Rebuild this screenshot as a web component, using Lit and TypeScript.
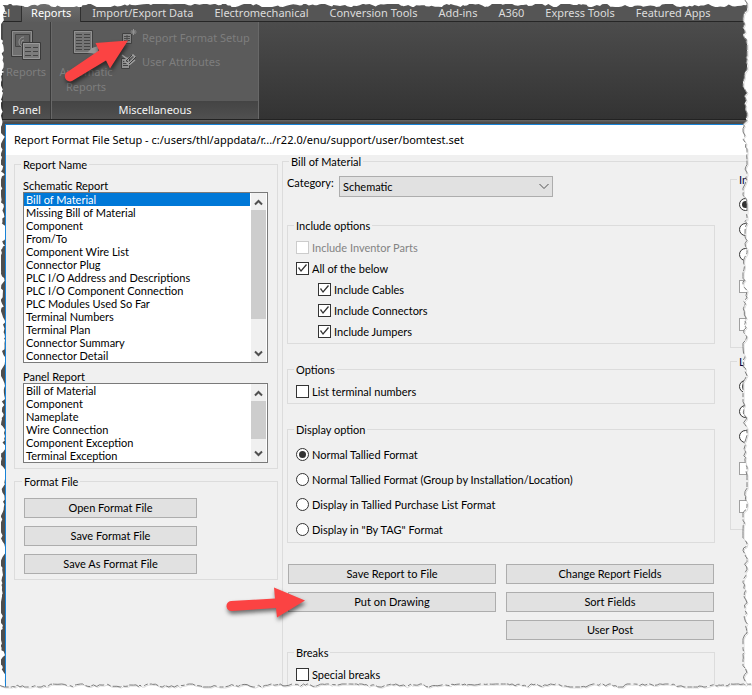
import { LitElement, html, css, svg, nothing } from "lit";
import { customElement, property } from "lit/decorators.js";

/* Deterministic noise so the torn paper edge is the same on every render. */
function noise(seed: number) {
  let s = seed;
  return () => {
    s = (s * 16807) % 2147483647;
    return s / 2147483647;
  };
}

/* Walks along an edge and returns [distance, depth] pairs. */
function tear(seed: number, length: number, low: number, high: number) {
  const rnd = noise(seed);
  const points: Array<[number, number]> = [];
  let depth = (low + high) / 2;
  let at = 0;
  while (at < length) {
    points.push([Math.round(at * 10) / 10, Math.round(depth * 10) / 10]);
    at += 1 + rnd() * 3;
    depth = Math.min(high, Math.max(low, depth + (rnd() - 0.5) * (high - low) * 1.3));
  }
  return points;
}

const REACH = 4000;

@customElement("torn-edge")
class TornEdge extends LitElement {
  @property() side: "top" | "right" | "bottom" | "left" = "top";

  static styles = css`
    :host { position: absolute; z-index: 3; pointer-events: none; overflow: hidden; }
    :host([side="top"]) { top: 0; left: 0; right: 0; height: 10px; }
    :host([side="bottom"]) { bottom: 0; left: 0; right: 0; height: 16px; }
    :host([side="left"]) { top: 0; bottom: 0; left: 0; width: 10px; }
    :host([side="right"]) { top: 0; bottom: 0; right: 0; width: 16px; }
    svg { display: block; }
    .paper { fill: #fff; }
    .rim { fill: none; stroke: #7c7c7c; stroke-width: 1; stroke-dasharray: 9 2 5 1 14 3 4 2; }
    .shade { fill: none; stroke: #dadada; stroke-width: 1; }
  `;

  render() {
    const flat = this.side === "top" || this.side === "bottom";
    const ranges = { top: [4, 7], left: [1, 5], right: [7, 11], bottom: [5, 8] } as const;
    const seeds = { top: 71, left: 913, right: 4201, bottom: 377 };
    const [low, high] = ranges[this.side];
    const pts = tear(seeds[this.side], REACH, low, high);
    const line = pts.map(([a, d]) => (flat ? `${a},${d}` : `${d},${a}`)).join(" ");
    const outer = this.side === "top" || this.side === "left" ? 0 : 20;
    const close = flat ? `${REACH},${outer} 0,${outer}` : `${outer},${REACH} ${outer},0`;
    const cast = this.side === "right" || this.side === "bottom";
    return html`<svg
      aria-hidden="true"
      width=${flat ? REACH : 16}
      height=${flat ? 16 : REACH}
    >
      <polygon class="paper" points="${line} ${close}"></polygon>
      ${cast
        ? svg`<polyline class="shade" transform="translate(1 1)" points=${line}></polyline>
              <polyline class="rim" points=${line}></polyline>`
        : nothing}
    </svg>`;
  }
}

@customElement("list-box")
class ListBox extends LitElement {
  @property() label = "";
  @property({ type: Array }) items: string[] = [];
  @property({ type: Number }) selected = -1;
  @property({ type: Number }) thumb = 60;

  static styles = css`
    :host { display: block; }
    label { display: block; line-height: 12px; }
    .frame { display: flex; border: 1px solid #7a7a7a; background: #fff; padding-right: 1px; }
    select {
      flex: 1; min-width: 0; margin: 0 1px 0 0; padding: 0; border: 0; border-radius: 0; outline: 0;
      background: #fff; font: inherit; color: #000; overflow: hidden; scrollbar-width: none;
      appearance: none; height: auto;
    }
    option { padding: 0 2px; min-height: 13px; height: 13px; line-height: 14px; box-sizing: border-box; }
    option:checked { background: #0078d7 linear-gradient(#0078d7, #0078d7); color: #fff; }
    .bar { width: 15px; background: #f0f0f0; display: flex; flex-direction: column; }
    .bar svg { display: block; flex: none; width: 15px; height: 17px; fill: none; stroke: #505050; stroke-width: 2; }
    .track { flex: 1; }
    .thumb { background: #cdcdcd; }
  `;

  render() {
    return html`
      <label for="list">${this.label}</label>
      <div class="frame">
        <select id="list" size=${this.items.length}>
          ${this.items.map(
            (t, i) => html`<option ?selected=${i === this.selected}>${t}</option>`
          )}
        </select>
        <div class="bar" aria-hidden="true">
          <svg viewBox="0 0 15 17"><path d="M4 11.500 7.500 8 11 11.500"></path></svg>
          <div class="track"><div class="thumb" style="height:${this.thumb}%"></div></div>
          <svg viewBox="0 0 15 17"><path d="M4 6.500 7.500 10 11 6.500"></path></svg>
        </div>
      </div>
    `;
  }
}

const TABS = [
  "el", "Reports", "Import/Export Data", "Electromechanical", "Conversion Tools",
  "Add-ins", "A360", "Express Tools", "Featured Apps",
];

const SCHEMATIC = [
  "Bill of Material", "Missing Bill of Material", "Component", "From/To",
  "Component Wire List", "Connector Plug", "PLC I/O Address and Descriptions",
  "PLC I/O Component Connection", "PLC Modules Used So Far", "Terminal Numbers",
  "Terminal Plan", "Connector Summary", "Connector Detail",
];

const PANEL = [
  "Bill of Material", "Component", "Nameplate", "Wire Connection",
  "Component Exception", "Terminal Exception",
];

const DISPLAY = [
  "Normal Tallied Format",
  "Normal Tallied Format (Group by Installation/Location)",
  "Display in Tallied Purchase List Format",
  'Display in "By TAG" Format',
];

@customElement("app-root")
class AppRoot extends LitElement {
  static styles = css`
    :host { display: block; background: #fff; color: #000; font: 11px/13px Lato, "Liberation Sans", Arial, sans-serif; }
    * { box-sizing: border-box; }
    button, input, select { font: inherit; color: inherit; margin: 0; }

    .window {
      position: relative; display: flex; flex-direction: column; min-height: 100vh;
      background: #4e4e4e; overflow: hidden;
    }

    .tabs, .ribbon, .title { font-family: "Noto Sans", "Open Sans", sans-serif; }
    .tabs {
      display: flex; gap: 1px; height: 22px; padding-top: 4px; border-bottom: 1px solid #262626;
      background: #555; color: #dcdcdc; white-space: nowrap;
    }
    .tab { flex: none; border: 0; background: none; padding: 0 10px; line-height: 16px; height: 18px; }
    .tab:first-child { padding-left: 1px; }
    .tab.current { background: linear-gradient(#6e6e6e, #5c5c5c); border: solid #303030; border-width: 0 1px; padding: 0 9px; color: #fff; }
    .ribbon {
      display: flex; height: 98px; background: linear-gradient(#4c4c4c, #333);
      border-bottom: 1px solid #222; padding-left: 3px;
    }
    .panel { display: flex; flex-direction: column; border-right: 1px solid #3a3a3a; background: #5b5b5b; }
    .panel.reports { width: 48px; }
    .panel.misc { width: 208px; border-left: 1px solid #686868; border-right-color: #686868; }
    .tools { flex: 1; display: flex; }
    .caption { height: 18px; line-height: 18px; text-align: center; color: #f4f4f4; background: linear-gradient(#444, #505050); }
    .tool {
      border: 0; background: none; padding: 0; color: #7e7e7e; display: flex; white-space: nowrap;
      align-items: center;
    }
    .tool.big { flex-direction: column; line-height: 15px; padding-top: 6px; }
    .tool.big svg { width: 32px; height: 36px; flex: none; }
    .reports .tool.big { width: 46px; }
    .misc .tool.big { width: 68px; }
    .tool.small { height: 24px; gap: 4px; }
    .tool.small svg { width: 18px; height: 18px; }
    .stack { padding-top: 3px; }

    .desk { flex: 1; display: flex; padding: 4px 0 0 5px; background: linear-gradient(#686868, #484848 3px, #4e4e4e 4px); }
    .dialog {
      flex: 1; min-width: 0; display: flex; flex-direction: column; background: #f0f0f0;
      border: solid #1883d7; border-width: 1px 0 0 1px;
    }
    .title { margin: 0; height: 30px; padding-left: 8px; background: #fff; font-size: 11px; font-weight: 400; line-height: 30px; white-space: nowrap; }
    .body { flex: 1; display: grid; grid-template-columns: 264px minmax(0, 1fr); column-gap: 4px; padding-left: 8px; }

    fieldset { margin: 0; min-width: 0; border: 1px solid #dcdcdc; padding: 0 8px; }
    legend { padding: 0 2px; margin-left: -2px; line-height: 13px; }

    .side { padding-top: 3px; display: flex; flex-direction: column; gap: 6px; }
    .names { padding: 9px 9px 5px 8px; display: flex; flex-direction: column; gap: 8px; }
    .files { padding: 10px 9px 5px; display: flex; flex-direction: column; gap: 8px; }
    .btn { height: 20px; border: 1px solid #adadad; background: #e1e1e1; padding: 0; text-align: center; line-height: 18px; }
    .files .btn { width: 173px; }

    .main { border-width: 1px 0 0 1px; padding: 0 0 0 4px; display: flex; }
    .main > legend { margin-left: 2px; }
    .columns { flex: 1; display: grid; grid-template-columns: minmax(0, 1fr) 22px; column-gap: 15px; min-height: 100%; }
    .middle { padding-top: 8px; display: flex; flex-direction: column; }
    .category { display: flex; margin-bottom: 22px; }
    .category label { width: 52px; line-height: 14px; }
    .combo { position: relative; width: 214px; display: flex; }
    .combo select { appearance: none; width: 100%; height: 21px; border: 1px solid #adadad; border-radius: 0; background: #e1e1e1; padding: 0 3px; }
    .combo svg { position: absolute; right: 4px; top: 6px; width: 10px; height: 9px; fill: none; stroke: #505050; }
    .group { margin-bottom: 19px; padding: 5px 8px 1px; }
    .group.display { padding: 6px 8px 0; margin-bottom: 21px; }
    .group.breaks { flex: 1; margin: 6px 0 0; border-bottom: 0; }
    .row { display: flex; align-items: center; height: 21px; gap: 3px; white-space: nowrap; }
    .row.inner { margin-left: 22px; }
    .row.off { color: #838383; }
    .display .row, .far .row { height: 25px; }

    input { appearance: none; flex: none; width: 13px; height: 13px; border: 1px solid #333; background: #fff; display: grid; place-items: center; }
    input[type="radio"] { border-radius: 50%; }
    input:disabled { border-color: #ccc; }
    input[type="checkbox"]:checked::before {
      content: ""; width: 11px; height: 11px; background: #333;
      clip-path: polygon(1px 5px, 2px 4px, 4px 7px, 9px 1px, 10px 2px, 4px 9px);
    }
    input[type="radio"]:checked::before { content: ""; width: 7px; height: 7px; border-radius: 50%; background: #333; }

    .actions { display: grid; grid-template-columns: 1fr 1fr; gap: 8px 10px; padding: 0 1px; }
    .actions .last { grid-column: 2; }

    .far { padding-top: 5px; display: flex; flex-direction: column; gap: 7px; overflow: hidden; }
    .far fieldset { height: 175px; border-right: 0; padding: 6px 0 0 8px; white-space: nowrap; }
    .far legend { color: #00003c; }
    .far .row.low { height: 38px; }
    .far input:disabled { border-color: #a0a0a0; }

    .arrow { position: absolute; z-index: 2; fill: #fb4343; filter: drop-shadow(1px 3px 2px rgba(0, 0, 0, 0.55)); pointer-events: none; overflow: visible; }
    .arrow.first { left: 60px; top: 35px; }
    .arrow.second { left: 220px; top: 580px; }
  `;

  private check(label: string, opts: { on?: boolean; off?: boolean; inner?: boolean } = {}) {
    return html`<label class="row ${opts.inner ? "inner" : ""} ${opts.off ? "off" : ""}">
      <input type="checkbox" ?checked=${opts.on} ?disabled=${opts.off} />${label}
    </label>`;
  }

  private far(legend: string, name: string) {
    return html`<fieldset>
      <legend>${legend}</legend>
      ${[0, 1, 2].map(
        (i) => html`<div class="row"><input type="radio" name=${name} aria-label=${legend} ?checked=${i === 0} /></div>`
      )}
      ${[0, 1].map(
        () => html`<div class="row low"><input type="checkbox" aria-label=${legend} disabled /></div>`
      )}
    </fieldset>`;
  }

  render() {
    return html`
      <div class="window">
        <nav class="tabs">
          ${TABS.map((t) => html`<button class="tab ${t === "Reports" ? "current" : ""}">${t}</button>`)}
        </nav>
        <div class="ribbon">
          <section class="panel reports">
            <div class="tools">
              <button class="tool big">
                <svg viewBox="0 0 32 36" fill="none">
                  <path d="M1.500 2.500h21v26h-21z" fill="#707070" stroke="#3a3a3a"></path>
                  <path d="M2.500 3.500h19v24h-19z" stroke="#8e8e8e"></path>
                  <path d="M5.500 6.500h14v12h-14z" fill="#626262" stroke="#444"></path>
                  <path d="M14 9a5 5 0 1 0 0 10M14 12a2.500 2.500 0 1 0 0 5" stroke="#969696"></path>
                  <path d="M12.500 14.500h18v17h-18z" fill="#7c7c7c" stroke="#3a3a3a"></path>
                  <path d="M13.500 15.500h16v15h-16z" stroke="#9a9a9a"></path>
                  <path d="M15 19.500h6M23 19.500h5M15 23.500h6M23 23.500h5M15 27.500h6M23 27.500h5" stroke="#444"></path>
                </svg>
                Reports
              </button>
            </div>
            <div class="caption">Panel</div>
          </section>
          <section class="panel misc">
            <div class="tools">
              <button class="tool big">
                <svg viewBox="0 0 32 36" fill="none">
                  <path d="M3.500 2.500h19v23h-19z" fill="#757575" stroke="#3e3e3e"></path>
                  <path d="M4.500 3.500h17v21h-17z" stroke="#929292"></path>
                  <path d="M6 6.500h6M14 6.500h6M6 9.500h6M14 9.500h6M6 12.500h6M14 12.500h6M6 15.500h6M14 15.500h6M6 18.500h6M14 18.500h6M6 21.500h6M14 21.500h6" stroke="#444"></path>
                  <path d="M17 25l5-5 6-2v8z" fill="#989898"></path>
                </svg>
                <span>Automatic<br />Reports</span>
              </button>
              <div class="stack">
                <button class="tool small">
                  <svg viewBox="0 0 18 18" fill="none">
                    <path d="M2.500 5.500h9v10h-9z" fill="#858585" stroke="#404040"></path>
                    <path d="M4 8.500h6M4 10.500h6M4 12.500h6M7 7v7" stroke="#4a4a4a"></path>
                    <path d="M13.500 1v6M10.500 4h6M11.500 2l4 4M15.500 2l-4 4" stroke="#929292"></path>
                  </svg>
                  Report Format Setup
                </button>
                <button class="tool small">
                  <svg viewBox="0 0 18 18" fill="none">
                    <path d="M1.500 6.500h8v10h-8z" fill="#909090" stroke="#404040"></path>
                    <path d="M3 9.500h5M3 11.500h5M3 13.500h5" stroke="#444"></path>
                    <path d="M2 3l4 3 3 1M5 9l8-6 2 2-7 7zM9 13l6-5" stroke="#a0a0a0" stroke-width="1.500"></path>
                    <path d="M6 9l6-6M9 12l7-7" stroke="#3c3c3c"></path>
                  </svg>
                  User Attributes
                </button>
              </div>
            </div>
            <div class="caption">Miscellaneous</div>
          </section>
        </div>

        <div class="desk">
          <main class="dialog">
            <h1 class="title">Report Format File Setup - c:/users/thl/appdata/r.../r22.0/enu/support/user/bomtest.set</h1>
            <div class="body">
              <div class="side">
                <fieldset class="names">
                  <legend>Report Name</legend>
                  <list-box label="Schematic Report" .items=${SCHEMATIC} .selected=${0} .thumb=${81}></list-box>
                  <list-box label="Panel Report" .items=${PANEL} .thumb=${86}></list-box>
                </fieldset>
                <fieldset class="files">
                  <legend>Format File</legend>
                  <button class="btn">Open Format File</button>
                  <button class="btn">Save Format File</button>
                  <button class="btn">Save As Format File</button>
                </fieldset>
              </div>
              <fieldset class="main">
                <legend>Bill of Material</legend>
                <div class="columns">
                  <div class="middle">
                    <div class="category">
                      <label for="category">Category:</label>
                      <div class="combo">
                        <select id="category"><option>Schematic</option></select>
                        <svg viewBox="0 0 10 9" aria-hidden="true"><path d="M.5 2 5 6.500 9.500 2"></path></svg>
                      </div>
                    </div>
                    <fieldset class="group">
                      <legend>Include options</legend>
                      ${this.check("Include Inventor Parts", { off: true })}
                      ${this.check("All of the below", { on: true })}
                      ${this.check("Include Cables", { on: true, inner: true })}
                      ${this.check("Include Connectors", { on: true, inner: true })}
                      ${this.check("Include Jumpers", { on: true, inner: true })}
                    </fieldset>
                    <fieldset class="group">
                      <legend>Options</legend>
                      ${this.check("List terminal numbers")}
                    </fieldset>
                    <fieldset class="group display">
                      <legend>Display option</legend>
                      ${DISPLAY.map(
                        (t, i) => html`<label class="row"><input type="radio" name="display" ?checked=${i === 0} />${t}</label>`
                      )}
                    </fieldset>
                    <div class="actions">
                      <button class="btn">Save Report to File</button>
                      <button class="btn">Change Report Fields</button>
                      <button class="btn">Put on Drawing</button>
                      <button class="btn">Sort Fields</button>
                      <button class="btn last">User Post</button>
                    </div>
                    <fieldset class="group breaks">
                      <legend>Breaks</legend>
                      ${this.check("Special breaks")}
                    </fieldset>
                  </div>
                  <div class="far">${this.far("In", "far-a")}${this.far("L", "far-b")}</div>
                </div>
              </fieldset>
            </div>
          </main>
        </div>

        <svg class="arrow first" width="70" height="50" aria-hidden="true">
          <path d="M68 5.500 35.500 8 39 15.500 8 36.500a5 5 0 0 0 4 9.500L46 25.500l4 8z"></path>
        </svg>
        <svg class="arrow second" width="86" height="40" aria-hidden="true">
          <path d="M85 20.500 54 7.500 55 18.500 11 21a4.500 4.500 0 0 0 1 10L56 28l1 9.500z"></path>
        </svg>
        <torn-edge side="top"></torn-edge>
        <torn-edge side="left"></torn-edge>
        <torn-edge side="right"></torn-edge>
        <torn-edge side="bottom"></torn-edge>
      </div>
    `;
  }
}
